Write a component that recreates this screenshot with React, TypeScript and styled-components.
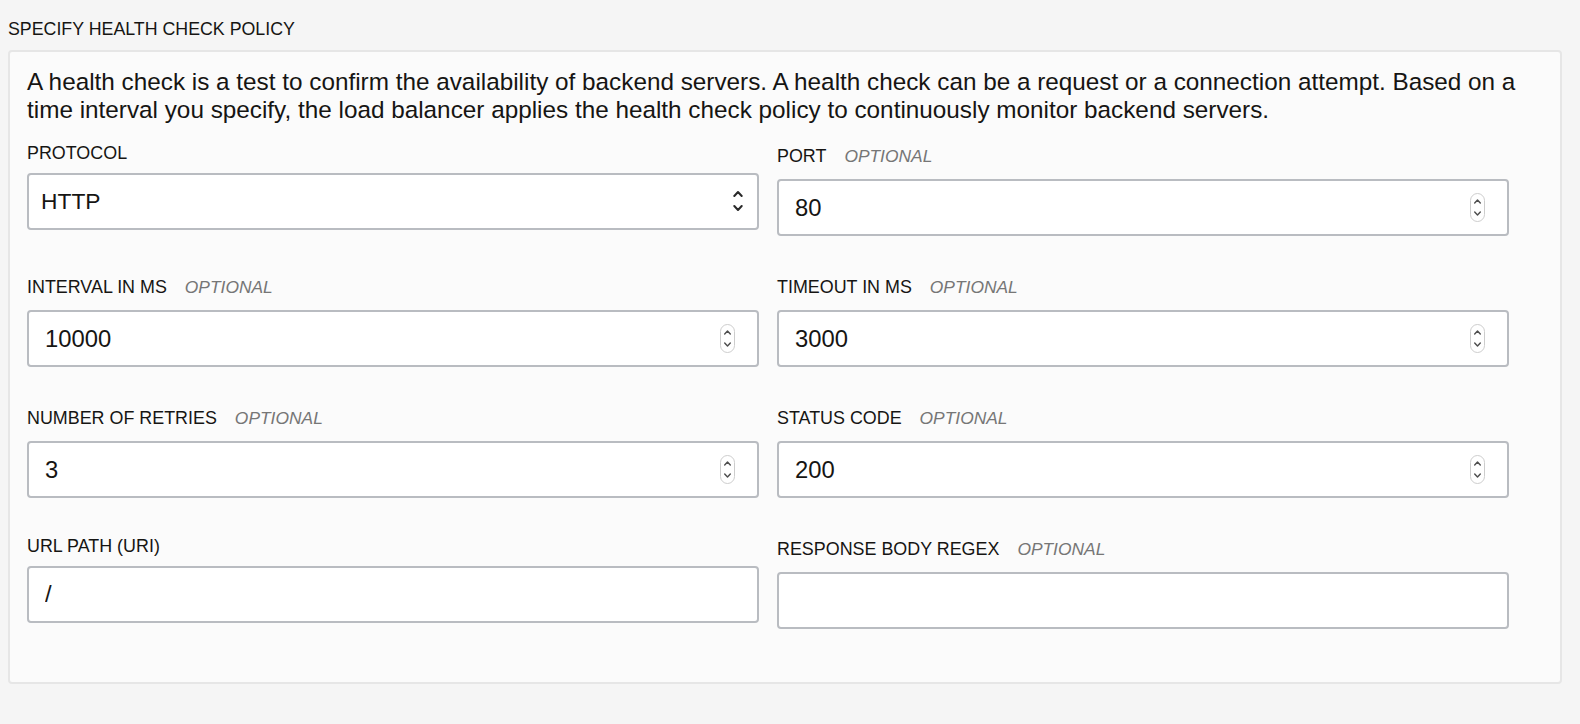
import React from "react";
import styled, { createGlobalStyle } from "styled-components";

const GlobalStyle = createGlobalStyle`
  html, body {
    margin: 0;
    padding: 0;
    background: #f5f5f5;
    font-family: "Liberation Sans", Arial, Helvetica, sans-serif;
    color: #161513;
  }
  * { box-sizing: border-box; }
`;

const Page = styled.div`
  padding: 19px 18px 40px 8px;
  min-height: 724px;
`;

const Title = styled.h2`
  margin: 0 0 11px;
  font-size: 17.8px;
  line-height: 20px;
  font-weight: 400;
  color: #161513;
`;

const Panel = styled.section`
  background: #fbfbfb;
  border: 2px solid #e6e6e6;
  border-radius: 4px;
  padding: 16px 17px 53px 17px;
`;

const Intro = styled.p`
  margin: 0 0 19px;
  font-size: 24.3px;
  line-height: 28px;
  color: #161513;
`;

const FormGrid = styled.div`
  display: grid;
  grid-template-columns: repeat(2, 732px);
  column-gap: 18px;
  row-gap: 38px;
  align-items: start;
`;

const Field = styled.div`
  display: flex;
  flex-direction: column;
`;

const LabelRow = styled.label`
  display: flex;
  align-items: baseline;
  gap: 18px;
  margin-bottom: 9.5px;
`;

const LabelText = styled.span`
  font-size: 17.9px;
  line-height: 20px;
  color: #161513;
`;

const OptionalText = styled.span`
  font-size: 17.4px;
  line-height: 26.6px;
  font-style: italic;
  color: #767676;
`;

const Box = styled.div<{ $select?: boolean }>`
  display: flex;
  align-items: center;
  height: 57px;
  border: 2px solid #b9bcc1;
  border-radius: 4px;
  background: #ffffff;
  padding: ${(p) => (p.$select ? "0 14px 0 12px" : "0 22px 0 16px")};
`;

const ValueInput = styled.input<{ $size: number }>`
  flex: 1;
  min-width: 0;
  border: none;
  outline: none;
  background: transparent;
  padding: 0;
  margin: 0;
  font-family: inherit;
  font-size: ${(p) => p.$size}px;
  line-height: 28px;
  color: #161513;
`;

const ChevronIcon = styled.svg`
  flex: none;
  display: block;
`;

const SelectChevrons = () => (
  <ChevronIcon width="10" height="22" viewBox="0 0 10 22" aria-hidden>
    <path d="M1.3 6 L5 2 L8.7 6" fill="none" stroke="#2a2a2a" strokeWidth="2" strokeLinecap="round" strokeLinejoin="round" />
    <path d="M1.3 16 L5 20 L8.7 16" fill="none" stroke="#2a2a2a" strokeWidth="2" strokeLinecap="round" strokeLinejoin="round" />
  </ChevronIcon>
);

const SpinnerPill = () => (
  <ChevronIcon width="15" height="29" viewBox="0 0 15 29" aria-hidden>
    <rect x="0.5" y="0.5" width="14" height="28" rx="7" fill="#ffffff" stroke="#cdcdcd" />
    <path d="M4.7 10 L7.5 7 L10.3 10" fill="none" stroke="#4d4d4d" strokeWidth="1.4" strokeLinecap="round" strokeLinejoin="round" />
    <path d="M4.7 19 L7.5 22 L10.3 19" fill="none" stroke="#4d4d4d" strokeWidth="1.4" strokeLinecap="round" strokeLinejoin="round" />
  </ChevronIcon>
);

type FieldDef = {
  label: string;
  optional?: boolean;
  kind: "select" | "number" | "text";
  value: string;
};

const fields: FieldDef[] = [
  { label: "PROTOCOL", kind: "select", value: "HTTP" },
  { label: "PORT", optional: true, kind: "number", value: "80" },
  { label: "INTERVAL IN MS", optional: true, kind: "number", value: "10000" },
  { label: "TIMEOUT IN MS", optional: true, kind: "number", value: "3000" },
  { label: "NUMBER OF RETRIES", optional: true, kind: "number", value: "3" },
  { label: "STATUS CODE", optional: true, kind: "number", value: "200" },
  { label: "URL PATH (URI)", kind: "text", value: "/" },
  { label: "RESPONSE BODY REGEX", optional: true, kind: "text", value: "" },
];

export default function App() {
  return (
    <>
      <GlobalStyle />
      <Page>
        <Title>SPECIFY HEALTH CHECK POLICY</Title>
        <Panel>
          <Intro>
            A health check is a test to confirm the availability of backend servers. A health check can be a
            request or a connection attempt. Based on a time interval you specify, the load balancer applies the
            health check policy to continuously monitor backend servers.
          </Intro>
          <FormGrid>
            {fields.map((f) => (
              <Field key={f.label}>
                <LabelRow>
                  <LabelText>{f.label}</LabelText>
                  {f.optional && <OptionalText>OPTIONAL</OptionalText>}
                </LabelRow>
                <Box $select={f.kind === "select"}>
                  <ValueInput
                    type="text"
                    readOnly
                    value={f.value}
                    aria-label={f.label}
                    $size={f.kind === "select" ? 22.8 : 23.8}
                  />
                  {f.kind === "select" && <SelectChevrons />}
                  {f.kind === "number" && <SpinnerPill />}
                </Box>
              </Field>
            ))}
          </FormGrid>
        </Panel>
      </Page>
    </>
  );
}
